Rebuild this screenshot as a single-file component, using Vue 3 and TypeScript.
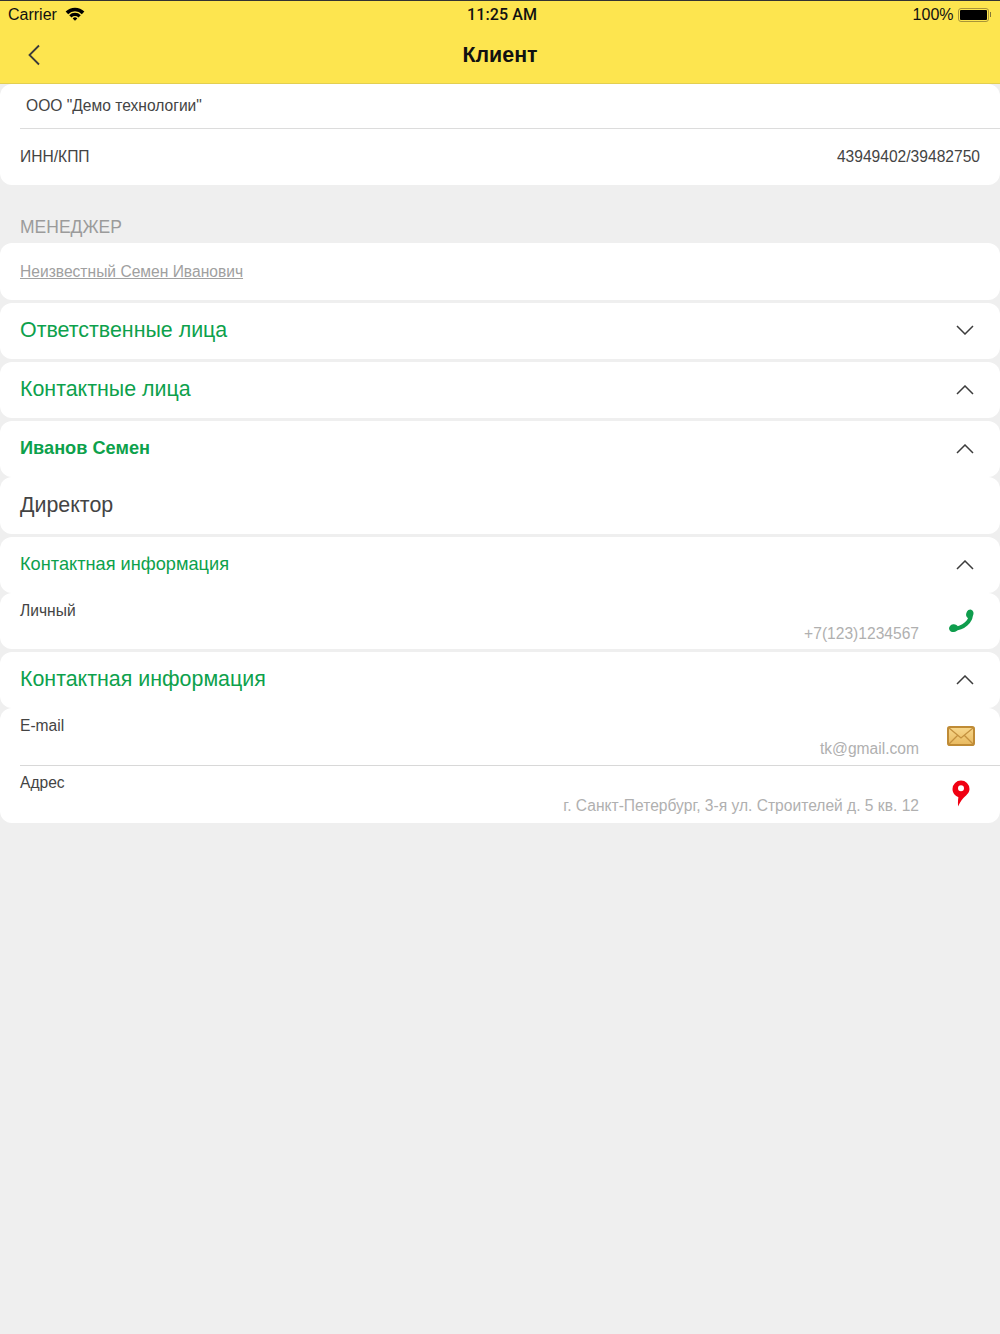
<script setup lang="ts">
</script>

<template>
  <div class="page">
    <header class="nav">
      <div class="status">
        <div class="st-left">
          <span>Carrier</span>
          <svg width="20" height="15" viewBox="0 0 19 14"><path d="M0.6 5.2 A12.4 12.4 0 0 1 18.4 5.2 L16 7.6 A9 9 0 0 0 3 7.6 Z M4 8.6 A7.6 7.6 0 0 1 15 8.6 L12.8 10.8 A4.6 4.6 0 0 0 6.2 10.8 Z M7.3 11.8 A3 3 0 0 1 11.7 11.8 L9.5 14 Z" fill="#000"/></svg>
        </div>
        <span class="st-time">11:25 AM</span>
        <div class="st-right">
          <span>100%</span>
          <span class="battery"><span class="fill"></span></span>
          <span class="nub"></span>
        </div>
      </div>
      <div class="bar">
        <svg class="back" width="14" height="22" viewBox="0 0 14 22"><path d="M12 1.5 L2.5 11 L12 20.5" fill="none" stroke="#3a3a3a" stroke-width="1.8"/></svg>
        <span class="title">Клиент</span>
      </div>
    </header>

    <section class="card first">
      <div class="company">ООО "Демо технологии"</div>
      <div class="inn">
        <span>ИНН/КПП</span>
        <span>43949402/39482750</span>
      </div>
    </section>

    <div class="section-label">МЕНЕДЖЕР</div>

    <div class="stack">
      <div class="card row manager"><span class="link">Неизвестный Семен Иванович</span></div>

      <div class="card row head">
        <span class="green big">Ответственные лица</span>
        <svg class="chev down" width="18" height="10" viewBox="0 0 18 10"><path d="M1 1 L9 9 L17 1" fill="none" stroke="#3c3c3c" stroke-width="1.5"/></svg>
      </div>
      <div class="card row head">
        <span class="green big">Контактные лица</span>
        <svg class="chev" width="18" height="10" viewBox="0 0 18 10"><path d="M1 9 L9 1 L17 9" fill="none" stroke="#3c3c3c" stroke-width="1.5"/></svg>
      </div>

      <div class="group">
        <div class="card row head person">
          <span class="green bold">Иванов Семен</span>
          <svg class="chev" width="18" height="10" viewBox="0 0 18 10"><path d="M1 9 L9 1 L17 9" fill="none" stroke="#3c3c3c" stroke-width="1.5"/></svg>
        </div>
        <div class="card row role">Директор</div>
      </div>

      <div class="group">
        <div class="card row head sub">
          <span class="green mid">Контактная информация</span>
          <svg class="chev" width="18" height="10" viewBox="0 0 18 10"><path d="M1 9 L9 1 L17 9" fill="none" stroke="#3c3c3c" stroke-width="1.5"/></svg>
        </div>
        <div class="card info">
          <div class="info-text">
            <span class="info-label">Личный</span>
            <span class="info-value">+7(123)1234567</span>
          </div>
          <svg class="icon" width="26" height="26" viewBox="0 0 26 26">
            <path d="M22.6 7 C23 13 15.5 20.5 6 20.8" fill="none" stroke="#0f9d4d" stroke-width="4.2"/>
            <ellipse cx="21.8" cy="6" rx="3.6" ry="4.6" transform="rotate(18 21.8 6)" fill="#0f9d4d"/>
            <ellipse cx="5.6" cy="20.2" rx="4.6" ry="3.9" transform="rotate(-8 5.6 20.2)" fill="#0f9d4d"/>
          </svg>
        </div>
      </div>

      <div class="group">
        <div class="card row head">
          <span class="green big">Контактная информация</span>
          <svg class="chev" width="18" height="10" viewBox="0 0 18 10"><path d="M1 9 L9 1 L17 9" fill="none" stroke="#3c3c3c" stroke-width="1.5"/></svg>
        </div>
        <div class="card details">
          <div class="info ruled">
            <div class="info-text">
              <span class="info-label">E-mail</span>
              <span class="info-value">tk@gmail.com</span>
            </div>
            <svg class="icon env" width="28" height="20" viewBox="0 0 28 20">
              <defs>
                <linearGradient id="envFill" x1="0" y1="0" x2="0" y2="1">
                  <stop offset="0" stop-color="#f8d88c"/>
                  <stop offset="1" stop-color="#e8b95f"/>
                </linearGradient>
              </defs>
              <rect x="1" y="1" width="26" height="18" rx="1.8" fill="url(#envFill)" stroke="#bf8b35" stroke-width="2"/>
              <path d="M2 2 L14 12 L26 2 M2 18 L10.5 9.5 M26 18 L17.5 9.5" fill="none" stroke="#c4913f" stroke-width="1.3"/>
            </svg>
          </div>
          <div class="info">
            <div class="info-text">
              <span class="info-label">Адрес</span>
              <span class="info-value">г. Санкт-Петербург, 3-я ул. Строителей д. 5 кв. 12</span>
            </div>
            <svg class="icon pin" width="18" height="27" viewBox="0 0 18 27">
              <path fill-rule="evenodd" d="M9 0.6 A8.5 8.5 0 0 1 17.5 9 C17.5 13.4 13.4 15.8 11 18.4 C9 20.6 7.4 23.4 6.2 26.4 C5.8 23.4 5.9 20.4 6.4 17.2 C3.2 15.8 0.5 13.2 0.5 9 A8.5 8.5 0 0 1 9 0.6 Z M9 5.2 A3 3 0 1 0 9 11.2 A3 3 0 1 0 9 5.2 Z" fill="#f00012"/>
            </svg>
          </div>
        </div>
      </div>
    </div>
  </div>
</template>

<style>
html, body { margin: 0; background: #efefef; }
</style>

<style scoped>
.page {
  width: 1000px;
  height: 1334px;
  overflow: hidden;
  background: #efefef;
  font-family: "Liberation Sans", Arial, sans-serif;
  color: #444;
}
.nav {
  background: #fde54f;
  border-top: 1px solid #333;
  border-bottom: 1px solid #e3cf50;
  box-sizing: border-box;
  height: 84px;
}
.status {
  height: 27px;
  display: flex;
  align-items: center;
  justify-content: space-between;
  padding: 0 0 0 8px;
  font-size: 16px;
  color: #111;
  position: relative;
}
.st-left, .st-right { display: flex; align-items: center; }
.st-left svg { margin-left: 8px; margin-top: -2px; }
.st-time {
  position: absolute;
  left: 0;
  right: 0;
  text-align: center;
  font-family: Roboto, "Liberation Sans", sans-serif;
  font-weight: 500;
  font-size: 16px;
  letter-spacing: 0.1px;
  padding-left: 4px;
}
.st-right { padding-right: 9px; }
.battery {
  margin-left: 4px;
  width: 31px;
  height: 14px;
  border: 1px solid #a89438;
  border-radius: 3px;
  box-sizing: border-box;
  padding: 1px;
  display: block;
}
.fill { display: block; height: 100%; background: #000; border-radius: 1px; }
.nub { width: 1.5px; height: 5px; background: #857736; margin-left: 1px; }
.bar {
  height: 55px;
  display: flex;
  align-items: center;
  justify-content: center;
  position: relative;
}
.back { position: absolute; left: 27px; top: 16px; }
.title { font-size: 21.4px; font-weight: 700; color: #111; margin-top: -1px; }

.card { background: #fff; border-radius: 12px; }
.first { height: 101px; }
.company {
  height: 44px;
  margin-left: 20px;
  padding-left: 6px;
  border-bottom: 1px solid #dcdcdc;
  display: flex;
  align-items: center;
  font-size: 15.6px;
}
.inn {
  height: 56px;
  padding: 0 20px;
  display: flex;
  align-items: center;
  justify-content: space-between;
  font-size: 15.6px;
}
.section-label {
  height: 58px;
  box-sizing: border-box;
  padding: 32px 20px 0;
  font-size: 17.5px;
  line-height: 21px;
  color: #9b9b9b;
}
.stack { display: flex; flex-direction: column; gap: 3px; }
.group { display: flex; flex-direction: column; }
.row {
  display: flex;
  align-items: center;
  justify-content: space-between;
  padding: 0 26px 0 20px;
  height: 56px;
}
.manager { height: 57px; }
.link { font-size: 15.6px; color: #a0a0a0; text-decoration: underline; }
.green { color: #0da14c; margin-top: -2px; }
.big { font-size: 21.4px; }
.bold { font-size: 18.2px; font-weight: 700; }
.mid { font-size: 18.2px; }
.down { margin-top: -2px; }
.role { font-size: 21.4px; height: 57px; }
.info {
  position: relative;
  display: flex;
  height: 56px;
  background: #fff;
  border-radius: 12px;
}
.info-text {
  flex: 1;
  position: relative;
}
.info-label {
  position: absolute;
  left: 20px;
  top: 9px;
  font-size: 15.6px;
}
.info-value {
  position: absolute;
  right: 81px;
  top: 32px;
  font-size: 15.6px;
  color: #b0b0b0;
  white-space: nowrap;
}
.icon { position: absolute; left: 948px; top: 15px; }
.env { left: 947px; top: 18px; }
.pin { left: 952px; }
.details { height: 115px; }
.ruled { height: 57px; }
.ruled::after {
  content: "";
  position: absolute;
  left: 20px;
  right: 0;
  bottom: -1px;
  height: 1px;
  background: #d8d8d8;
}
.details .info { background: none; }
</style>
